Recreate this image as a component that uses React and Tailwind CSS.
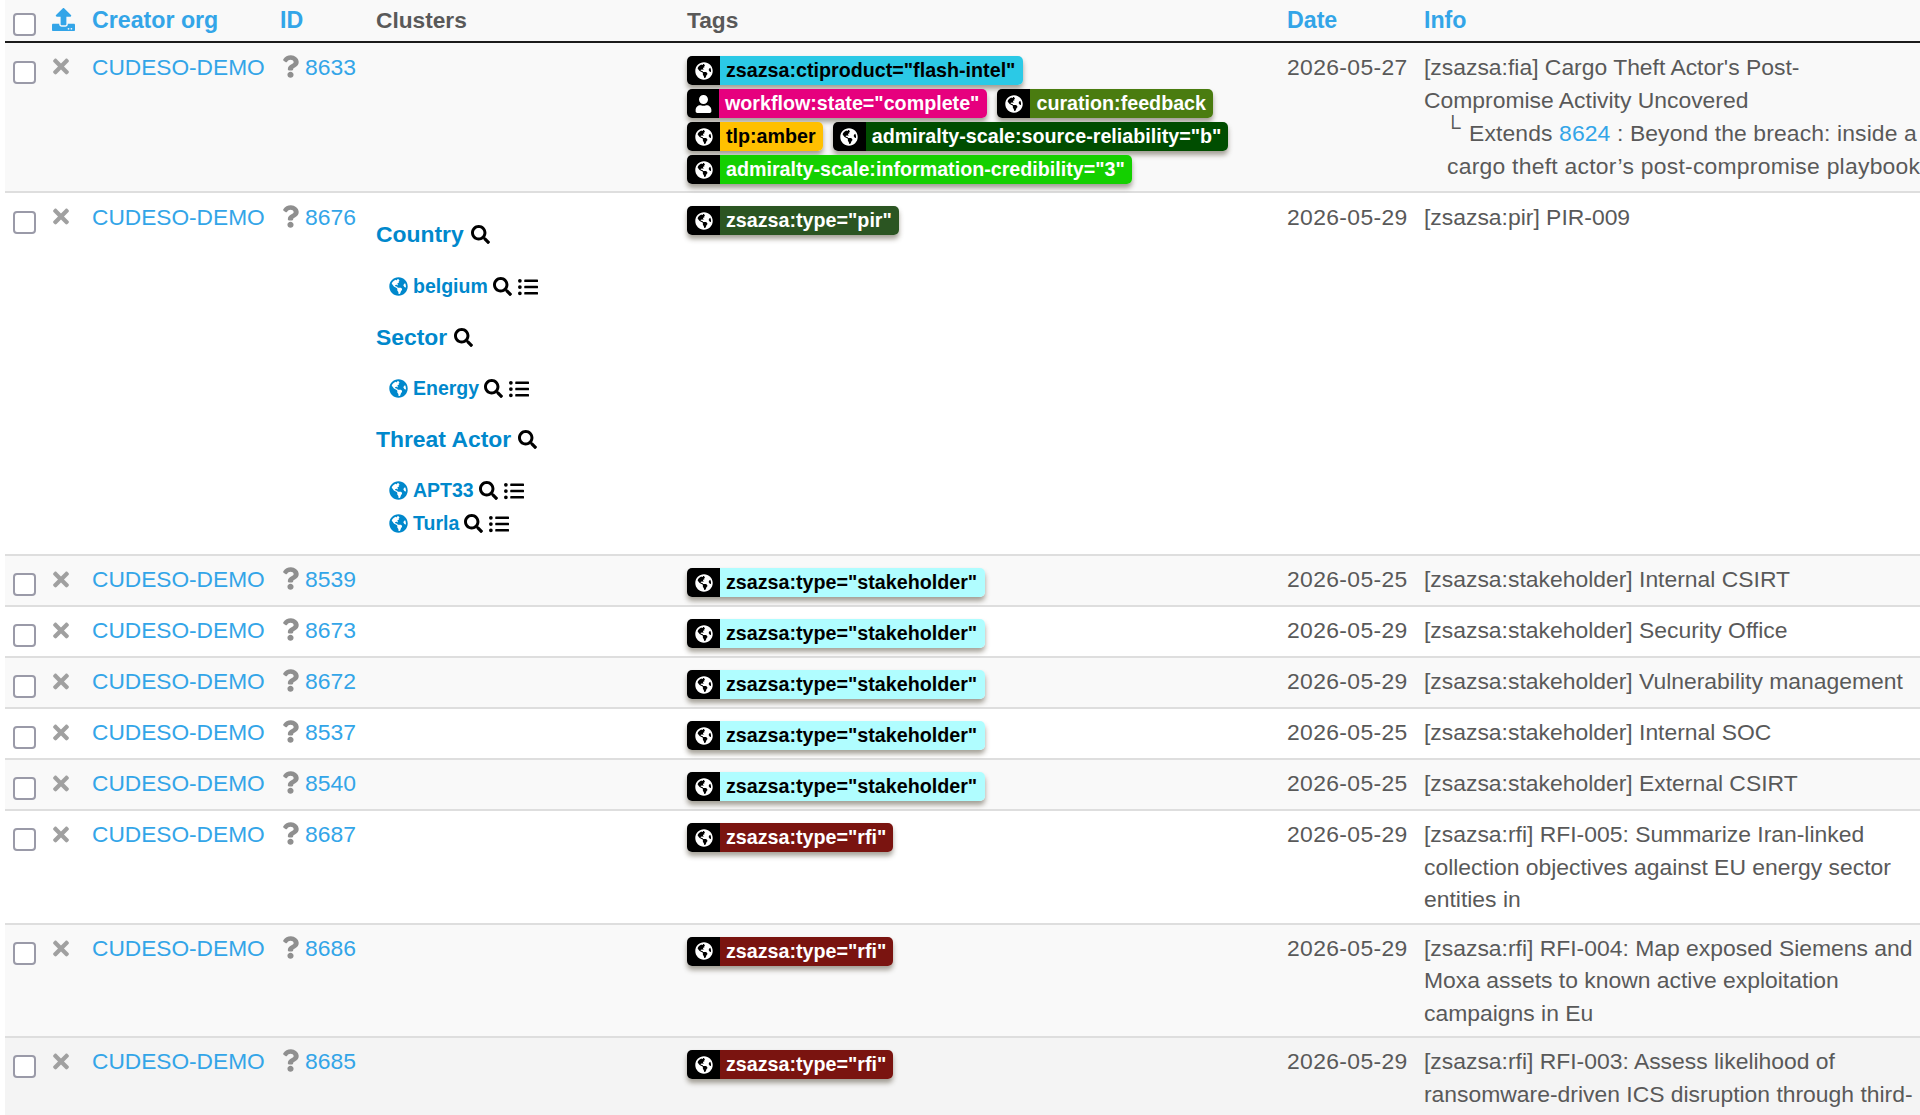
import React from "react";
import { FaGlobeAmericas, FaUser, FaSearch, FaListUl, FaQuestion, FaTimes, FaUpload } from "react-icons/fa";

const Tag = ({ bg, text = "text-white", icon = "globe", children, iconW = "w-[33px]", wide }) => (
  <span className={`inline-flex h-[29px] rounded-[5px] overflow-hidden align-top shadow-[0_4px_5px_rgba(60,50,30,0.45)] font-bold text-[19.7px] leading-[29px] whitespace-nowrap ${text}`}>
    <span className={`bg-black text-white flex items-center justify-center ${iconW}`}>
      {icon === "globe" ? <FaGlobeAmericas className="w-[18px] h-[18px]" /> : <FaUser className="w-[17px] h-[18px]" />}
    </span>
    <span className={`pl-[6px] ${wide ? "pr-[8px]" : "pr-[7px]"} ${bg}`}>{children}</span>
  </span>
);

const TagRow = ({ children }) => <div className="flex gap-[10px] h-[33px]">{children}</div>;

const Check = ({ className }) => (
  <input type="checkbox" readOnly className={`appearance-none block w-[23px] h-[23px] bg-white border-2 border-[#9a9aa8] rounded-[4px] ${className}`} />
);

const Head = ({ link, children }) => (
  <th className={`pl-2 text-left font-bold align-top h-[42px] leading-[40px] border-b-2 border-[#1c1c1c] ${link ? "text-[#33a5e8] text-[23.2px]" : "text-[#595959] text-[22.7px]"}`}>
    {children}
  </th>
);

const Cluster = ({ name }) => (
  <div className="flex items-center gap-[5px] h-[33px] pl-[13px] text-[19.5px] font-bold text-[#0088cc]">
    <FaGlobeAmericas className="w-[19px] h-[19px]" />
    <span>{name}</span>
    <FaSearch className="w-[19px] h-[19px] text-black" />
    <FaListUl className="w-[22px] h-[20px] text-black" />
  </div>
);

const ClusterHead = ({ name, className = "" }) => (
  <div className={`flex items-center gap-[7px] h-[33px] font-bold text-[#0088cc] ${className}`}>
    <span>{name}</span>
    <FaSearch className="w-[19px] h-[19px] text-black" />
  </div>
);

const Row = ({ bg = "", top, id, date, tags, clusters, children }) => {
  const pad = top ? "pt-2" : "pt-[7px]";
  return (
    <tr className={`${bg} border-b-2 border-[#dedede]`}>
      <td className="pl-2 align-top"><Check className={top ? "mt-[18px]" : "mt-[17px]"} /></td>
      <td className={`pl-2 align-top ${pad}`}>
        <FaTimes className={`w-[16px] h-[23px] text-[#a0a0a0] ml-[2px] ${top ? "mt-[4px]" : "mt-[5px]"}`} />
      </td>
      <td className={`pl-2 align-top text-[#33a5e8] text-[22.7px] ${pad}`}>CUDESO-DEMO</td>
      <td className={`pl-2 align-top ${pad}`}>
        <span className="flex items-center gap-[6px] h-[32.5px]">
          <FaQuestion className="w-[17px] h-[23px] text-[#8f8f8f] ml-[2px] -mt-[1px]" />
          <span className="text-[#33a5e8]">{id}</span>
        </span>
      </td>
      <td className={`pl-2 align-top ${pad}`}>{clusters}</td>
      <td className={`pl-2 align-top ${top ? "pt-[13px] pb-[3px]" : "pt-[12px] pb-[4px]"}`}>{tags}</td>
      <td className={`pl-2 align-top tracking-[0.36px] ${pad}`}>{date}</td>
      <td className={`pl-2 align-top whitespace-nowrap ${top ? "pt-2 pb-[6px]" : "pt-[7px] pb-[7px]"}`}>{children}</td>
    </tr>
  );
};

const Stakeholder = () => <TagRow><Tag wide bg="bg-[#b0fdff]" text="text-black">zsazsa:type="stakeholder"</Tag></TagRow>;
const Rfi = () => <TagRow><Tag bg="bg-[#7a1410]">zsazsa:type="rfi"</Tag></TagRow>;

export default function App() {
  return (
    <div className="w-[1920px] h-[1115px] overflow-hidden bg-white pl-[5px] text-[#595959] text-[22.9px] leading-[32.5px] font-['Liberation_Sans',Arial,sans-serif]">
      <table className="table-fixed w-[1955px] border-collapse">
        <colgroup>
          <col className="w-[38px]" />
          <col className="w-[41px]" />
          <col className="w-[188px]" />
          <col className="w-[96px]" />
          <col className="w-[311px]" />
          <col className="w-[600px]" />
          <col className="w-[137px]" />
          <col className="w-[544px]" />
        </colgroup>
        <thead>
          <tr className="bg-[#f9f9f9]">
            <Head><Check className="mt-[13px]" /></Head>
            <Head link><FaUpload className="w-[23px] h-[23px] mt-[8px] ml-[1px]" /></Head>
            <Head link>Creator org</Head>
            <Head link>ID</Head>
            <Head>Clusters</Head>
            <Head>Tags</Head>
            <Head link>Date</Head>
            <Head link>Info</Head>
          </tr>
        </thead>
        <tbody>
          <Row
            top
            bg="bg-[#f9f9f9]"
            id="8633"
            date="2026-05-27"
            tags={
              <>
                <TagRow><Tag wide bg="bg-[#2bc9e6]" text="text-black">zsazsa:ctiproduct="flash-intel"</Tag></TagRow>
                <TagRow>
                  <Tag wide bg="bg-[#e6007e]" icon="user" iconW="w-[32px]">workflow:state="complete"</Tag>
                  <Tag bg="bg-[#4a7c10]">curation:feedback</Tag>
                </TagRow>
                <TagRow>
                  <Tag bg="bg-[#ffc000]" text="text-black">tlp:amber</Tag>
                  <Tag bg="bg-[#004d00]">admiralty-scale:source-reliability="b"</Tag>
                </TagRow>
                <TagRow><Tag bg="bg-[#14d000]">admiralty-scale:information-credibility="3"</Tag></TagRow>
              </>
            }
          >
            <div>
              [zsazsa:fia] Cargo Theft Actor's Post-<br />Compromise Activity Uncovered
            </div>
            <div className="relative pl-[23px] mt-[1px]">
              <span className="absolute left-[21px] top-[-5px] text-[22px]">└</span>
              <div className="pl-[22px] tracking-[0.12px]">
                Extends <span className="text-[#33a5e8]">8624</span> : Beyond the breach: inside a
              </div>
              <div className="tracking-[0.25px]">cargo theft actor’s post-compromise playbook</div>
            </div>
          </Row>
          <Row
            top
            id="8676"
            date="2026-05-29"
            tags={<TagRow><Tag bg="bg-[#2b5522]">zsazsa:type="pir"</Tag></TagRow>}
            clusters={
              <div className="pt-[16px] pb-[14px]">
                <ClusterHead name="Country" className="mt-[1px] mb-[19px]" />
                <Cluster name="belgium" />
                <ClusterHead name="Sector" className="mt-[18px] mb-[18px]" />
                <Cluster name="Energy" />
                <ClusterHead name="Threat Actor" className="mt-[18px] mb-[18px]" />
                <Cluster name="APT33" />
                <Cluster name="Turla" />
              </div>
            }
          >
            [zsazsa:pir] PIR-009
          </Row>
          <Row bg="bg-[#f9f9f9]" id="8539" date="2026-05-25" tags={<Stakeholder />}>[zsazsa:stakeholder] Internal CSIRT</Row>
          <Row id="8673" date="2026-05-29" tags={<Stakeholder />}>[zsazsa:stakeholder] Security Office</Row>
          <Row bg="bg-[#f9f9f9]" id="8672" date="2026-05-29" tags={<Stakeholder />}>[zsazsa:stakeholder] Vulnerability management</Row>
          <Row id="8537" date="2026-05-25" tags={<Stakeholder />}>[zsazsa:stakeholder] Internal SOC</Row>
          <Row bg="bg-[#f9f9f9]" id="8540" date="2026-05-25" tags={<Stakeholder />}>[zsazsa:stakeholder] External CSIRT</Row>
          <Row id="8687" date="2026-05-29" tags={<Rfi />}>
            [zsazsa:rfi] RFI-005: Summarize Iran-linked<br />collection objectives against EU energy sector<br />entities in
          </Row>
          <Row bg="bg-[#f9f9f9]" id="8686" date="2026-05-29" tags={<Rfi />}>
            [zsazsa:rfi] RFI-004: Map exposed Siemens and<br />Moxa assets to known active exploitation<br />campaigns in Eu
          </Row>
          <Row bg="bg-[#f4f4f4]" id="8685" date="2026-05-29" tags={<Rfi />}>
            [zsazsa:rfi] RFI-003: Assess likelihood of<br />ransomware-driven ICS disruption through third-<br />&nbsp;
          </Row>
        </tbody>
      </table>
    </div>
  );
}
